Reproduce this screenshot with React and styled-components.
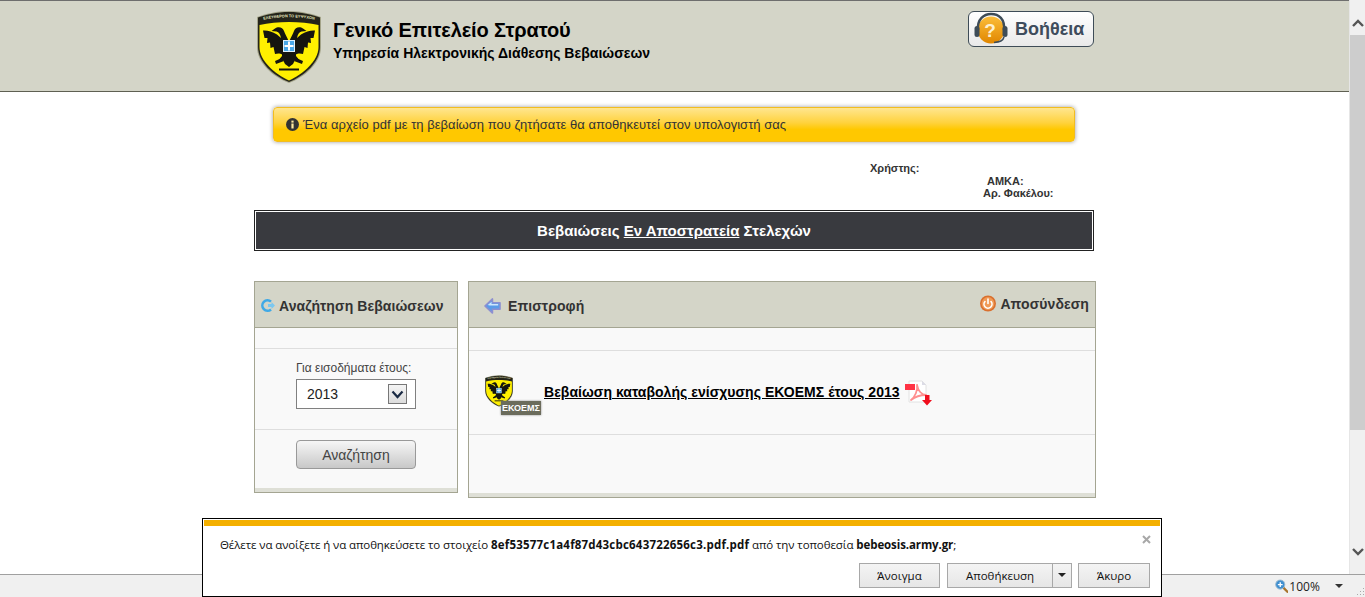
import React from 'react';
import styled, { createGlobalStyle } from 'styled-components';

const GlobalStyle = createGlobalStyle`
  html, body {
    margin: 0;
    padding: 0;
    height: 100%;
    overflow: hidden;
    background: #fff;
  }
  * { box-sizing: border-box; }
`;

const Shield = ({ width, height }) => (
  <svg width={width} height={height} viewBox="0 0 64 72">
    <defs>
      <path id="mottoArc" d="M3 9.5 Q32 3 61 9.5" />
    </defs>
    <path d="M32 0 C44 0 56 3 64 6 L64 36 C64 52 48 66 32 72 C16 66 0 52 0 36 L0 6 C8 3 20 0 32 0 Z" fill="#a3a388" />
    <path d="M32 1 C44 1 55 3.5 63 6.5 L63 36 C63 51 47.5 65 32 71 C16.5 65 1 51 1 36 L1 6.5 C9 3.5 20 1 32 1 Z" fill="#24241a" />
    <path d="M32 11 C42 11 53 12 61.5 14 L61.5 36 C61.5 50 46 63 32 69.5 C18 63 2.5 50 2.5 36 L2.5 14 C11 12 22 11 32 11 Z" fill="#fff000" />
    <text fontFamily="'Liberation Sans', sans-serif" fontSize="3.9" fontWeight="700" fill="#e6e6c0">
      <textPath href="#mottoArc" startOffset="50%" textAnchor="middle">ΕΛΕΥΘΕΡΟΝ ΤΟ ΕΥΨΥΧΟΝ</textPath>
    </text>
    <g fill="#15150f">
      <path d="M32 31 C30 26 28 23 27 20 C26 16 21 15 18 17.5 L14.5 20 L19.5 20.5 C22 21 23 23 24 27 L20 23.5 C15 20.5 10 19 6 19.5 L7.5 27 L10.5 27 L10 32 L13 31.5 L13.5 37 L16.5 36 L18 43 C20 42.5 23 42 25 43.5 L25 45 L20 51 L26 49 L28 53 L32 56 Z" />
      <path d="M32 31 C34 26 36 23 37 20 C38 16 43 15 46 17.5 L49.5 20 L44.5 20.5 C42 21 41 23 40 27 L44 23.5 C49 20.5 54 19 58 19.5 L56.5 27 L53.5 27 L54 32 L51 31.5 L50.5 37 L47.5 36 L46 43 C44 42.5 41 42 39 43.5 L39 45 L44 51 L38 49 L36 53 L32 56 Z" />
      <path d="M25 47 L18 50 L19 53 L27 50 Z M39 47 L46 50 L45 53 L37 50 Z" />
      <rect x="22" y="57.5" width="20" height="2" />
    </g>
    <rect x="26.5" y="29.5" width="11" height="11" fill="#4aa8e8" stroke="#dff0fa" strokeWidth="1" />
    <path d="M32 30.5 V39.5 M27.5 35 H36.5" stroke="#fff" strokeWidth="2" />
  </svg>
);

const HelpIcon = () => (
  <svg width="38" height="34" viewBox="0 0 38 34">
    <defs>
      <linearGradient id="helpFill" x1="0" y1="0" x2="0" y2="1">
        <stop offset="0" stopColor="#fbbd3a" />
        <stop offset="1" stopColor="#e08600" />
      </linearGradient>
    </defs>
    <circle cx="18" cy="18" r="13.5" fill="url(#helpFill)" />
    <path d="M5 18 C4 7 11 2 18 2 C26 2 32 7 31 18" fill="none" stroke="#3e4c57" strokeWidth="2.4" />
    <rect x="1.5" y="14" width="5" height="11" rx="2.5" fill="#3e4c57" />
    <rect x="29.5" y="14" width="5" height="11" rx="2.5" fill="#3e4c57" />
    <path d="M31 25 C30 29 27 30 21 30.5" fill="none" stroke="#3e4c57" strokeWidth="1.6" />
    <text x="17" y="25" textAnchor="middle" fontFamily="'Liberation Sans', sans-serif" fontWeight="700" fontSize="19" fill="#fdf0d0">?</text>
  </svg>
);

const InfoIcon = () => (
  <svg width="13" height="13" viewBox="0 0 13 13">
    <circle cx="6.5" cy="6.5" r="6.5" fill="#333" />
    <rect x="5.4" y="5.5" width="2.2" height="5" fill="#ffe9a0" />
    <rect x="5.4" y="2.6" width="2.2" height="2" fill="#ffe9a0" />
  </svg>
);

const SearchIcon = () => (
  <svg width="15" height="15" viewBox="0 0 15 15">
    <path d="M11 3.6 A5.2 5.2 0 1 0 11 11.4" fill="none" stroke="#3fa9e6" strokeWidth="2.6" />
    <path d="M8 6 H11.5 V4 L15 7.5 L11.5 11 V9 H8 Z" fill="#7cc8f0" />
  </svg>
);

const BackIcon = () => (
  <svg width="17" height="18" viewBox="0 0 18 18">
    <path d="M1 9 L9 1.5 V5.5 H17 V12.5 H9 V16.5 Z" fill="#5b9be8" stroke="#8d8fd0" strokeWidth="1.6" strokeLinejoin="round" />
    <path d="M4 8 L8 4.5 V7 H15 V8.5 H6 Z" fill="#cfe6fb" />
  </svg>
);

const PowerIcon = () => (
  <svg width="16" height="17" viewBox="0 0 16 17">
    <circle cx="8" cy="8.5" r="8" fill="#d9702f" />
    <circle cx="8" cy="8.5" r="6.4" fill="#f09a56" />
    <path d="M5 6.5 A4 4 0 1 0 11 6.5" fill="none" stroke="#fff" strokeWidth="1.6" strokeLinecap="round" />
    <path d="M8 4 V8.5" stroke="#fff" strokeWidth="1.6" strokeLinecap="round" />
  </svg>
);

const PdfIcon = () => (
  <svg width="27" height="26" viewBox="0 0 27 26">
    <path d="M4 1 H17 L21 5 V22 H4 Z" fill="#fff" stroke="#e2e2e2" />
    <path d="M17 1 V5 H21 Z" fill="#dcdce6" />
    <path d="M6 20 C10 17 13 10 12 5 C13 11 17 15 21 15 C16 15 11 16 6 20 Z" fill="#fff" stroke="#ff8f8f" strokeWidth="1.8" strokeLinejoin="round" />
    <rect x="0" y="4" width="10" height="6" fill="#ff3344" />
    <path d="M20 15 H24.5 V20 H27 L22 25.5 L17 20 H20 Z" fill="#f00d1c" />
  </svg>
);

const ZoomIcon = () => (
  <svg width="14" height="14" viewBox="0 0 14 14">
    <path d="M9 9 L13 13" stroke="#a8742c" strokeWidth="2.4" strokeLinecap="round" />
    <circle cx="5.5" cy="5.5" r="4.8" fill="#3f8fd0" stroke="#9dbad0" />
    <path d="M3 5.5 H8 M5.5 3 V8" stroke="#fff" strokeWidth="1.4" />
  </svg>
);

const App = () => {
  return (
    <Window>
      <GlobalStyle />
      <Viewport>
        <Page>
          <Header>
            <HeaderInner>
              <LogoBox><Shield width={64} height={72} /></LogoBox>
              <Titles>
                <Title>Γενικό Επιτελείο Στρατού</Title>
                <Subtitle>Υπηρεσία Ηλεκτρονικής Διάθεσης Βεβαιώσεων</Subtitle>
              </Titles>
              <HelpButton>
                <HelpIcon />
                <span>Βοήθεια</span>
              </HelpButton>
            </HeaderInner>
          </Header>

          <Content>
            <Alert>
              <InfoIcon />
              <span>Ένα αρχείο pdf με τη βεβαίωση που ζητήσατε θα αποθηκευτεί στον υπολογιστή σας</span>
            </Alert>

            <UserInfo>
              <UserLine $indent={616}>Χρήστης:</UserLine>
              <UserLine $indent={733}>ΑΜΚΑ:</UserLine>
              <UserLine $indent={729}>Αρ. Φακέλου:</UserLine>
            </UserInfo>

            <Banner>
              <BannerInner>Βεβαιώσεις <u>Εν Αποστρατεία</u> Στελεχών</BannerInner>
            </Banner>

            <Panels>
              <Panel $width={204}>
                <PanelHead>
                  <HeadLink>
                    <SearchIcon />
                    Αναζήτηση Βεβαιώσεων
                  </HeadLink>
                </PanelHead>
                <Row $height={21} />
                <FormRow>
                  <FieldLabel>Για εισοδήματα έτους:</FieldLabel>
                  <SelectBox>
                    2013
                    <SelectArrow>
                      <svg width="13" height="9" viewBox="0 0 13 9">
                        <path d="M1.5 1.5 L6.5 7 L11.5 1.5" fill="none" stroke="#1a2a44" strokeWidth="2.2" />
                      </svg>
                    </SelectArrow>
                  </SelectBox>
                </FormRow>
                <ButtonRow>
                  <SearchButton>Αναζήτηση</SearchButton>
                </ButtonRow>
                <PanelFoot />
              </Panel>

              <Panel $width={628}>
                <PanelHead $spread>
                  <HeadLink $gap={7}>
                    <BackIcon />
                    Επιστροφή
                  </HeadLink>
                  <HeadLink $gap={4} $up>
                    <PowerIcon />
                    Αποσύνδεση
                  </HeadLink>
                </PanelHead>
                <Row $height={23} />
                <DocRow>
                  <DocLogo>
                    <Shield width={28} height={32} />
                    <DocBadge>ΕΚΟΕΜΣ</DocBadge>
                  </DocLogo>
                  <DocLink>Βεβαίωση καταβολής ενίσχυσης ΕΚΟΕΜΣ έτους 2013</DocLink>
                  <PdfBox><PdfIcon /></PdfBox>
                </DocRow>
                <Row $height={58} $last />
                <PanelFoot />
              </Panel>
            </Panels>
          </Content>
        </Page>

        <Scrollbar>
          <ScrollButton>
            <svg width="12" height="8" viewBox="0 0 12 8">
              <path d="M1 7 L6 2 L11 7" fill="none" stroke="#555" strokeWidth="2.4" />
            </svg>
          </ScrollButton>
          <ScrollThumb />
          <ScrollTrack />
          <ScrollButton $bottom>
            <svg width="12" height="8" viewBox="0 0 12 8">
              <path d="M1 1 L6 6 L11 1" fill="none" stroke="#555" strokeWidth="2.4" />
            </svg>
          </ScrollButton>
        </Scrollbar>
      </Viewport>

      <StatusBar>
        <ZoomIcon />
        <ZoomText>100%</ZoomText>
        <ZoomCaret />
        <Grip>
          <svg width="9" height="9" viewBox="0 0 9 9">
            <path d="M7 1h1v1h-1zM4 4h1v1h-1zM7 4h1v1h-1zM1 7h1v1h-1zM4 7h1v1h-1zM7 7h1v1h-1z" fill="#aaa" />
          </svg>
        </Grip>
      </StatusBar>

      <Dialog>
        <DialogStripe />
        <DialogBody>
          <CloseMark>
            <svg width="9" height="9" viewBox="0 0 9 9">
              <path d="M1 1 L8 8 M8 1 L1 8" stroke="#a8a8a8" strokeWidth="2" />
            </svg>
          </CloseMark>
          <DialogText>
            Θέλετε να ανοίξετε ή να αποθηκεύσετε το στοιχείο <FileName>8ef53577c1a4f87d43cbc643722656c3.pdf.pdf</FileName> από την τοποθεσία <b>bebeosis.army.gr</b>;
          </DialogText>
          <DialogActions>
            <DialogButton $width={81}>Άνοιγμα</DialogButton>
            <SplitButton>
              <SplitMain>Αποθήκευση</SplitMain>
              <SplitCaret />
            </SplitButton>
            <DialogButton $width={72}>Άκυρο</DialogButton>
          </DialogActions>
        </DialogBody>
      </Dialog>
    </Window>
  );
};

const Window = styled.div`
  position: relative;
  width: 1365px;
  height: 597px;
  display: flex;
  flex-direction: column;
  overflow: hidden;
  font-family: "Liberation Sans", Arial, sans-serif;
`;

const Viewport = styled.div`
  height: 574px;
  display: flex;
  flex: none;
`;

const Page = styled.div`
  flex: 1;
  min-width: 0;
  overflow: hidden;
  background: #fff;
`;

const Header = styled.header`
  height: 92px;
  background: #d4d5c8;
  border-top: 1px solid #6e6e6e;
  border-bottom: 1px solid #5f6052;
`;

const HeaderInner = styled.div`
  width: 841px;
  margin: 0 auto;
  display: flex;
  align-items: flex-start;
`;

const LogoBox = styled.div`
  margin: 10px 0 0 3px;
  line-height: 0;
`;

const Titles = styled.div`
  margin: 17px 0 0 12px;
  flex: 1;
`;

const Title = styled.h1`
  margin: 0;
  font-size: 20px;
  line-height: 24px;
  font-weight: 700;
  letter-spacing: -0.12px;
  color: #000;
`;

const Subtitle = styled.div`
  margin-top: 3px;
  font-size: 14px;
  line-height: 16px;
  font-weight: 700;
  letter-spacing: 0.03px;
  color: #000;
`;

const HelpButton = styled.div`
  margin: 10px 1px 0 0;
  width: 126px;
  height: 36px;
  display: flex;
  align-items: center;
  padding-left: 4px;
  gap: 4px;
  border: 1px solid #3e4c57;
  border-radius: 6px;
  background: linear-gradient(#ffffff, #e9e9e9);
  font-size: 18px;
  font-weight: 700;
  color: #3e4c5c;
`;

const Content = styled.main`
  width: 841px;
  margin: 0 auto;
`;

const Alert = styled.div`
  margin: 15px 0 0 19px;
  width: 802px;
  height: 35px;
  display: flex;
  align-items: center;
  gap: 4px;
  padding-left: 12px;
  border: 1px solid #f2bd20;
  border-radius: 4px;
  background: linear-gradient(#ffe690 0%, #ffd23c 45%, #ffc800 65%, #ffc800 100%);
  box-shadow: 0 0 4px rgba(0, 0, 0, 0.4);
  font-size: 13px;
  letter-spacing: 0.03px;
  color: #333;
`;

const UserInfo = styled.div`
  margin-top: 20px;
  height: 48px;
  font-size: 11px;
  font-weight: 700;
  color: #333;
`;

const UserLine = styled.div`
  padding-left: ${({ $indent }) => $indent}px;
  height: 12.5px;
  line-height: 13px;
`;

const Banner = styled.div`
  width: 840px;
  height: 41px;
  border: 1px solid #222;
  padding: 1px;
  background: #fff;
`;

const BannerInner = styled.div`
  height: 100%;
  line-height: 37px;
  text-align: center;
  background: #393a3f;
  color: #fff;
  font-size: 15px;
  font-weight: 700;
`;

const Panels = styled.div`
  margin-top: 30px;
  display: flex;
  align-items: flex-start;
  gap: 10px;
`;

const Panel = styled.section`
  width: ${({ $width }) => $width}px;
  flex: none;
  border: 1px solid #a4a592;
  background: #f9f9f9;
`;

const PanelHead = styled.div`
  height: 46px;
  display: flex;
  align-items: center;
  justify-content: ${({ $spread }) => ($spread ? 'space-between' : 'flex-start')};
  padding: 2px 6px 0 ${({ $spread }) => ($spread ? 15 : 5)}px;
  background: #d4d5c8;
  border-bottom: 1px solid #a4a592;
`;

const HeadLink = styled.div`
  display: flex;
  align-items: center;
  gap: ${({ $gap }) => $gap ?? 4}px;
  margin-top: ${({ $up }) => ($up ? -4 : 0)}px;
  font-size: 14px;
  font-weight: 700;
  letter-spacing: 0.08px;
  color: #333;
`;

const Row = styled.div`
  height: ${({ $height }) => $height}px;
  border-bottom: ${({ $last }) => ($last ? 'none' : '1px solid #dedede')};
`;

const FormRow = styled.div`
  height: 81px;
  display: flex;
  flex-direction: column;
  align-items: center;
  padding-top: 12px;
  border-bottom: 1px solid #dedede;
`;

const FieldLabel = styled.div`
  width: 120px;
  font-size: 12px;
  line-height: 14px;
  color: #444;
`;

const SelectBox = styled.div`
  position: relative;
  margin-top: 4px;
  width: 120px;
  height: 30px;
  display: flex;
  align-items: center;
  padding-left: 10px;
  border: 1px solid #808080;
  background: #fff;
  font-size: 14px;
  color: #222;
`;

const SelectArrow = styled.div`
  position: absolute;
  right: 8px;
  top: 4px;
  width: 19px;
  height: 20px;
  display: flex;
  align-items: center;
  justify-content: center;
  border: 1px solid #777;
  background: linear-gradient(#f4f4f4, #dcdcdc);
`;

const ButtonRow = styled.div`
  height: 58px;
  display: flex;
  justify-content: center;
  padding-top: 10px;
`;

const SearchButton = styled.div`
  width: 120px;
  height: 29px;
  display: flex;
  align-items: center;
  justify-content: center;
  border: 1px solid #999;
  border-radius: 4px;
  background: linear-gradient(#f6f6f6, #c8c8c8);
  font-size: 14px;
  color: #444;
`;

const PanelFoot = styled.div`
  height: 4px;
  background: #dedfd6;
`;

const DocRow = styled.div`
  height: 84px;
  display: flex;
  align-items: flex-start;
  padding: 24px 0 0 16px;
  border-bottom: 1px solid #dedede;
`;

const DocLogo = styled.div`
  position: relative;
  width: 59px;
  line-height: 0;
`;

const DocBadge = styled.div`
  position: absolute;
  left: 16px;
  top: 26px;
  width: 40px;
  height: 14px;
  background: #6b6c5c;
  box-shadow: 0 0 2px #888;
  color: #fff;
  font-size: 9px;
  font-weight: 700;
  line-height: 14px;
  text-align: center;
`;

const DocLink = styled.a`
  margin: 9px 5px 0 0;
  font-size: 14px;
  line-height: 16px;
  font-weight: 700;
  letter-spacing: 0.03px;
  color: #000;
  text-decoration: underline;
`;

const PdfBox = styled.div`
  margin-top: 5px;
  line-height: 0;
`;

const Scrollbar = styled.div`
  width: 16px;
  flex: none;
  display: flex;
  flex-direction: column;
  background: #f0f0f0;
  border-left: 1px solid #e6e6e6;
`;

const ScrollButton = styled.div`
  height: ${({ $bottom }) => ($bottom ? 44 : 35)}px;
  display: flex;
  justify-content: center;
  align-items: ${({ $bottom }) => ($bottom ? 'flex-start' : 'center')};
  padding-top: ${({ $bottom }) => ($bottom ? 18 : 10)}px;
`;

const ScrollThumb = styled.div`
  height: 395px;
  background: #cdcdcd;
`;

const ScrollTrack = styled.div`
  flex: 1;
`;

const StatusBar = styled.footer`
  flex: 1;
  display: flex;
  align-items: center;
  padding-left: 1275px;
  background: #f0f0f0;
  border-top: 1px solid #a0a0a0;
  color: #222;
  font-family: "Open Sans", sans-serif;
  font-size: 12px;
`;

const ZoomText = styled.span`
  margin-left: 1px;
  width: 48px;
`;

const ZoomCaret = styled.span`
  width: 0;
  height: 0;
  border-left: 4px solid transparent;
  border-right: 4px solid transparent;
  border-top: 4px solid #333;
`;

const Grip = styled.span`
  margin-left: 13px;
  margin-top: 10px;
  line-height: 0;
`;

const Dialog = styled.div`
  position: absolute;
  left: 202px;
  top: 518px;
  width: 960px;
  height: 79px;
  border: 1px solid #000;
  padding: 1px;
  background: #fff;
  font-family: "Open Sans", sans-serif;
  color: #111;
`;

const DialogStripe = styled.div`
  height: 6px;
  background: #f4b000;
`;

const DialogBody = styled.div`
  position: relative;
  padding: 11px 10px 0 16px;
`;

const CloseMark = styled.div`
  position: absolute;
  right: 9px;
  top: 9px;
  line-height: 0;
`;

const DialogText = styled.div`
  font-size: 11.5px;
  line-height: 16px;
  letter-spacing: -0.1px;
  white-space: nowrap;
`;

const FileName = styled.b`
  letter-spacing: 0.2px;
`;

const DialogActions = styled.div`
  margin-top: 10px;
  display: flex;
  justify-content: flex-end;
  gap: 6px;
`;

const DialogButton = styled.div`
  width: ${({ $width }) => $width}px;
  height: 25px;
  display: flex;
  align-items: center;
  justify-content: center;
  border: 1px solid #a8a8a8;
  background: linear-gradient(#f4f4f4, #e6e6e6);
  font-size: 11.5px;
`;

const SplitButton = styled.div`
  margin-left: 1px;
  width: 125px;
  height: 25px;
  display: flex;
  border: 1px solid #a8a8a8;
  background: linear-gradient(#f4f4f4, #e6e6e6);
  font-size: 11.5px;
`;

const SplitMain = styled.div`
  flex: 1;
  display: flex;
  align-items: center;
  justify-content: center;
  border-right: 1px solid #a8a8a8;
`;

const SplitCaret = styled.div`
  width: 18px;
  position: relative;
  &::after {
    content: '';
    position: absolute;
    left: 5px;
    top: 9px;
    border-left: 4px solid transparent;
    border-right: 4px solid transparent;
    border-top: 4px solid #222;
  }
`;

export default App;
